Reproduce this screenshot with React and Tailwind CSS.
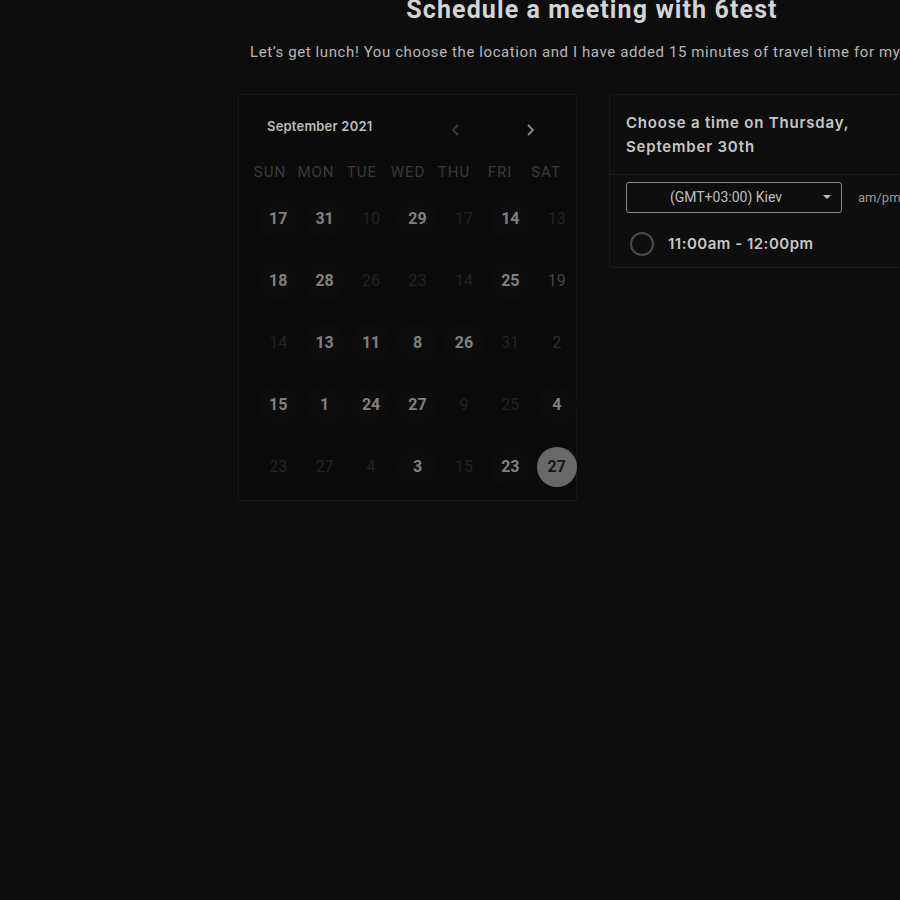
import React from "react";

const rows = [
  [["17","b"],["31","b"],["10","d"],["29","b"],["17","d"],["14","b"],["13","d"]],
  [["18","b"],["28","b"],["26","d"],["23","d"],["14","d"],["25","b"],["19","m"]],
  [["14","d"],["13","b"],["11","b"],["8","b"],["26","b"],["31","d"],["2","m2"]],
  [["15","b"],["1","b"],["24","b"],["27","b"],["9","d"],["25","d"],["4","b"]],
  [["23","d"],["27","d"],["4","d"],["3","b"],["15","d"],["23","b"],["27","s"]],
];

const days = ["SUN", "MON", "TUE", "WED", "THU", "FRI", "SAT"];

function Cell({ v, t }) {
  if (t === "s") {
    return (
      <div className="flex h-[62px] items-center justify-center">
        <div className="flex h-[40px] w-[40px] items-center justify-center rounded-full bg-[#696969] text-[16px] font-bold text-[#161616]">
          {v}
        </div>
      </div>
    );
  }
  if (t === "b") {
    return (
      <div className="flex h-[62px] items-center justify-center">
        <div className="flex h-[40px] w-[40px] items-center justify-center rounded-full bg-[#0d0d0d] text-[16px] font-bold text-[#808080]">
          {v}
        </div>
      </div>
    );
  }
  const color = t === "m" ? "text-[#454545]" : t === "m2" ? "text-[#2e2e2e]" : "text-[#222222]";
  return (
    <div className="flex h-[62px] items-center justify-center">
      <div className={`flex h-[40px] w-[40px] items-center justify-center text-[16px] ${color}`}>{v}</div>
    </div>
  );
}

export default function App() {
  return (
    <div className="h-[900px] w-[900px] overflow-hidden bg-[#0d0d0d] font-['Roboto',sans-serif]">
      <div className="ml-[238px] w-[708px]">
        <h1 className="mt-[-6px] text-center text-[25px] font-bold leading-[32px] tracking-[1.1px] text-[#d4d4d4]">
          Schedule a meeting with 6test
        </h1>
        <p className="mt-[16px] whitespace-nowrap pl-[12px] text-[15px] leading-[20px] tracking-[0.6px] text-[#b8b8b8]">
          Let’s get lunch! You choose the location and I have added 15 minutes of travel time for myself.
        </p>
        <div className="mt-[32px] flex items-start gap-[32px]">
          <div className="w-[339px] shrink-0 rounded-[3px] border border-[#181818] bg-[#0b0b0b] pb-[2px]">
            <div className="flex h-[62px] items-center pl-[28px] pt-[2px]">
              <span className="font-['Inter',sans-serif] text-[13px] font-semibold tracking-[0.2px] text-[#bdbdbd]">September 2021</span>
              <div className="ml-[77px] flex items-center gap-[60px] pt-[6px]">
                <svg width="14" height="14" viewBox="0 0 14 14" fill="none" stroke="#3a3a3a" strokeWidth="1.8">
                  <path d="M9 2 L4 7 L9 12" />
                </svg>
                <svg width="14" height="14" viewBox="0 0 14 14" fill="none" stroke="#8a8a8a" strokeWidth="1.8">
                  <path d="M5 2 L10 7 L5 12" />
                </svg>
              </div>
            </div>
            <div className="ml-[8px] grid w-[322px] grid-cols-7">
              {days.map((d) => (
                <div key={d} className="text-center text-[15px] leading-[30px] tracking-[1px] text-[#3a3a3a]">
                  {d}
                </div>
              ))}
            </div>
            <div className="mt-[1px] grid w-[341px] grid-cols-7 pl-[16px]">
              {rows.flat().map(([v, t], i) => (
                <Cell key={i} v={v} t={t} />
              ))}
            </div>
          </div>
          <div className="w-[337px] shrink-0 rounded-[3px] border border-[#1a1a1a] bg-[#0e0e0e]">
            <div className="border-b border-[#1c1c1c] px-[16px] pb-[15px] pt-[16px] font-['Inter',sans-serif] text-[15px] font-semibold leading-[24px] tracking-[0.8px] text-[#c6c6c6]">
              Choose a time on Thursday,
              <br />
              September 30th
            </div>
            <div className="flex items-center px-[16px] pt-[7px]">
              <div className="relative flex h-[31px] w-[216px] items-center justify-center rounded-[3px] border border-[#8a8a8a] pr-[16px] text-[14px] text-[#bdbdbd]">
                (GMT+03:00) Kiev
                <svg className="absolute right-[10px] top-[12px]" width="8" height="5" viewBox="0 0 8 5">
                  <path d="M0 0 L8 0 L4 4 Z" fill="#bdbdbd" />
                </svg>
              </div>
              <span className="ml-[16px] text-[13px] text-[#9a9a9a]">am/pm</span>
            </div>
            <div className="flex items-center pb-[11px] pl-[20px] pt-[19px]">
              <div className="h-[24px] w-[24px] rounded-full border-2 border-[#4a4a4a]" />
              <span className="ml-[14px] font-['Inter',sans-serif] text-[15px] font-semibold tracking-[0.5px] text-[#c6c6c6]">
                11:00am - 12:00pm
              </span>
            </div>
          </div>
        </div>
      </div>
    </div>
  );
}
